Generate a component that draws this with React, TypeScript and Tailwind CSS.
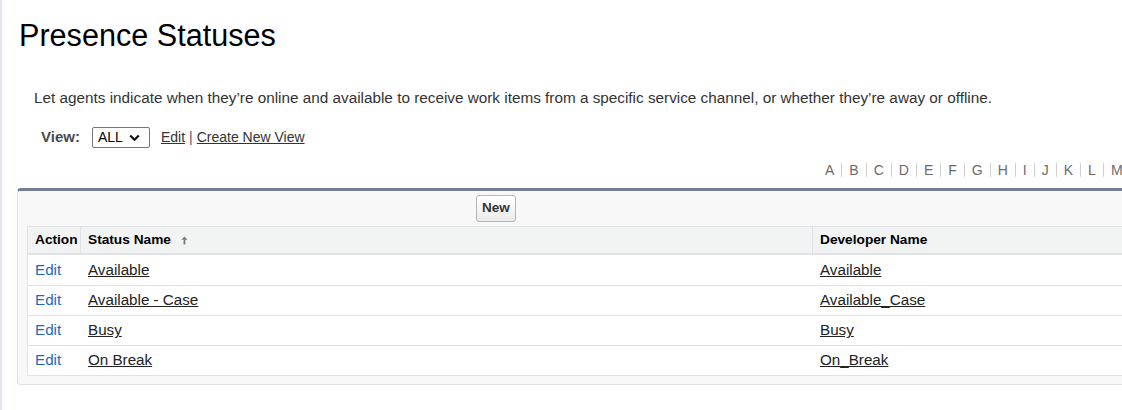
const letters = ["A", "B", "C", "D", "E", "F", "G", "H", "I", "J", "K", "L", "M"];

const rows = [
  { name: "Available", dev: "Available" },
  { name: "Available - Case", dev: "Available_Case" },
  { name: "Busy", dev: "Busy" },
  { name: "On Break", dev: "On_Break" },
];

function SortUp() {
  return (
    <svg width="7" height="9" viewBox="0 0 7 9" className="ml-[10px]" aria-hidden="true">
      <path d="M3.5 0.5 L6.5 3.8 H4.4 V8.5 H2.6 V3.8 H0.5 Z" fill="#7a7a7a" />
    </svg>
  );
}

function Chevron() {
  return (
    <svg width="11" height="8" viewBox="0 0 11 8" aria-hidden="true">
      <path d="M1.2 1.5 L5.5 5.8 L9.8 1.5" fill="none" stroke="#111" strokeWidth="2.2" />
    </svg>
  );
}

export default function App() {
  return (
    <div className="h-[410px] w-[1122px] overflow-hidden border-l-2 border-[#e0e5ee] bg-white font-['Liberation_Sans',Arial,sans-serif] text-[#222]">
      <div className="w-[1400px]">
        <h1 className="pl-[17px] pt-[17px] text-[30.6px] leading-[36px] text-black">Presence Statuses</h1>

        <p className="mt-[35px] pl-[32px] text-[15.3px] leading-[20px] text-[#333]">
          Let agents indicate when they’re online and available to receive work items from a specific service channel, or whether they’re away or offline.
        </p>

        <div className="mt-[19px] flex h-[21px] items-center pl-[39px] text-[14px]">
          <span className="text-[15px] font-bold text-[#4a4a4a]">View:</span>
          <div className="ml-[12px] flex h-[21px] w-[58px] items-center gap-[6px] rounded-[2px] border border-[#767676] pl-[5px] text-black">
            <span>ALL</span>
            <Chevron />
          </div>
          <a className="ml-[11px] text-[#333] underline">Edit</a>
          <span className="mx-[4px] text-[#555]">|</span>
          <a className="text-[#333] underline">Create New View</a>
        </div>

        <div className="mt-[14px] flex h-[16px] items-center pl-[823px] text-[14px] text-[#6b6b6b]">
          {letters.map((l, i) => (
            <div key={l} className="flex items-center">
              <span>{l}</span>
              {i < letters.length - 1 && <span className="mx-[7px] h-[14px] border-l border-[#cfcfcf]" />}
            </div>
          ))}
        </div>

        <div className="ml-[15px] mt-[10px] w-[1300px] rounded-[4px] border border-t-[3px] border-[#e0e3e5] border-t-[#747e96] bg-[#f8f8f8] pb-[8px] pl-[9px]">
          <div className="flex h-[35px] items-start pl-[449px] pt-[4px]">
            <button className="h-[27px] rounded-[3px] border border-[#b5b5b5] bg-linear-to-b from-white to-[#ececec] px-[5px] text-[13.5px] font-bold text-[#333]">
              New
            </button>
          </div>

          <div className="border border-[#e0e3e5] bg-white">
            <div className="flex h-[28px] border-b-2 border-[#e0e3e5] bg-[#f2f3f3] text-[13.7px] font-bold text-black">
              <div className="flex w-[53px] items-center border-r border-[#e0e3e5] pl-[7px] pt-[1px]">Action</div>
              <div className="flex w-[732px] items-center border-r border-[#e0e3e5] pl-[7px] pt-[1px]">
                Status Name
                <SortUp />
              </div>
              <div className="flex flex-1 items-center pl-[7px] pt-[1px]">Developer Name</div>
            </div>
            {rows.map((r, i) => (
              <div key={r.dev} className={`flex h-[30px] items-center text-[15.2px] ${i > 0 ? "border-t border-[#e3e3e3]" : ""}`}>
                <div className="w-[53px] pl-[7px] text-[#1b6bb7]">Edit</div>
                <div className="w-[732px] pl-[7px]">
                  <a className="text-[#222] underline">{r.name}</a>
                </div>
                <div className="flex-1 pl-[7px]">
                  <a className="text-[#222] underline">{r.dev}</a>
                </div>
              </div>
            ))}
          </div>
        </div>
      </div>
    </div>
  );
}
